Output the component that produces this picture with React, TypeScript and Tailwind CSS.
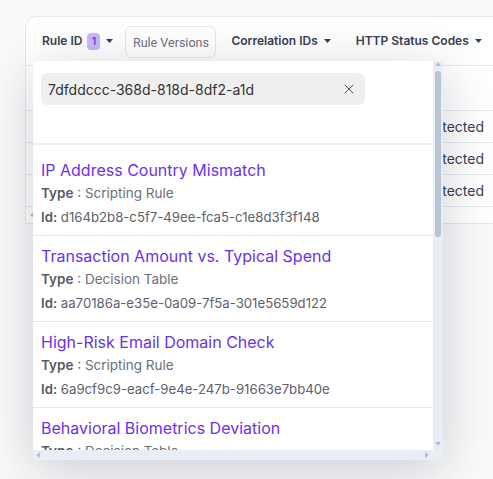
import { X } from "lucide-react";

const rules = [
  {
    name: "IP Address Country Mismatch",
    type: "Scripting Rule",
    id: "d164b2b8-c5f7-49ee-fca5-c1e8d3f3f148",
  },
  {
    name: "Transaction Amount vs. Typical Spend",
    type: "Decision Table",
    id: "aa70186a-e35e-0a09-7f5a-301e5659d122",
  },
  {
    name: "High-Risk Email Domain Check",
    type: "Scripting Rule",
    id: "6a9cf9c9-eacf-9e4e-247b-91663e7bb40e",
  },
  {
    name: "Behavioral Biometrics Deviation",
    type: "Decision Table",
    id: "0c7e21d4-5a8b-4f3e-9d12-7b6a3e8f1c20",
  },
];

function Caret() {
  return (
    <svg width="7" height="4" viewBox="0 0 7 4" className="ml-[6px]">
      <path d="M0 0h7L3.5 4z" fill="#374151" />
    </svg>
  );
}

function Arrow({ dir }: { dir: "up" | "down" | "left" | "right" }) {
  const d = {
    up: "M0 4h6L3 0z",
    down: "M0 0h6L3 4z",
    left: "M4 0v6L0 3z",
    right: "M0 0v6L4 3z",
  }[dir];
  const box = dir === "up" || dir === "down" ? "0 0 6 4" : "0 0 4 6";
  const w = dir === "up" || dir === "down" ? 6 : 4;
  const h = dir === "up" || dir === "down" ? 4 : 6;
  return (
    <svg width={w} height={h} viewBox={box}>
      <path d={d} fill="#b3bfcd" />
    </svg>
  );
}

export default function App() {
  return (
    <div className="relative h-[479px] w-[493px] overflow-hidden bg-[#fafafb] pl-[25px] pt-4 font-['Inter',sans-serif]">
      {/* table card */}
      <div className="w-[500px] rounded-tl-xl border border-[#e6e8ef] bg-white">
        <div className="flex h-[49px] items-center border-b border-[#e6e8ef] pl-4 text-[12px] font-semibold text-[#374151]">
          <span>Rule ID</span>
          <span className="ml-[5px] flex h-[17px] w-[13px] items-center justify-center rounded-[4px] bg-[#c9b9f8] text-[11px] font-medium text-[#6d31e6]">
            1
          </span>
          <Caret />
          <button className="ml-[12px] mt-[1px] flex h-[32px] w-[91px] items-center justify-center rounded-md border border-[#e6e8ef] pt-[3px] font-['Roboto',sans-serif] text-[12.5px] font-normal text-[#6b7280]">
            Rule Versions
          </button>
          <span className="ml-[15px]">Correlation IDs</span>
          <Caret />
          <span className="ml-[25px]">HTTP Status Codes</span>
          <Caret />
        </div>
        <div className="h-[45px] border-b border-[#e6e8ef]" />
        {[0, 1, 2].map((i) => (
          <div
            key={i}
            className="flex h-[32px] items-center border-b border-[#e6e8ef] pl-[398px] text-[14px] text-[#374151]"
          >
            Detected
          </div>
        ))}
        <div className="flex h-[16px] items-center pl-[4px]">
          <Arrow dir="left" />
        </div>
      </div>

      {/* dropdown popover */}
      <div className="absolute left-[33px] top-[61px] flex h-[399px] w-[410px] flex-col bg-white shadow-[0_10px_50px_rgba(20,25,50,0.2)]">
        <div className="flex min-h-0 flex-1">
          <div className="min-w-0 flex-1 overflow-hidden">
            <div className="h-[84px] border-b-2 border-[#ededed] px-2 pt-3">
              <div className="flex h-8 w-[324px] items-center justify-between rounded-md bg-[#efefef] pl-[7px] pr-[8px]">
                <span className="text-[14px] text-[#333]">7dfddccc-368d-818d-8df2-a1d</span>
                <X size={16} strokeWidth={1.5} color="#555" />
              </div>
            </div>
            <div className="pt-[5px]">
              {rules.map((r) => (
                <div key={r.name} className="border-b border-[#e8e8e8] px-2 pb-[5px] pt-2">
                  <div className="text-[16px] leading-6 text-[#6d31e6]">{r.name}</div>
                  <div className="text-[13.5px] leading-[23px] text-[#6b6f78]">
                    <span className="font-semibold text-[#555a63]">Type</span> : {r.type}
                  </div>
                  <div className="text-[13.2px] leading-[25px] text-[#5c616c]">
                    <span className="font-semibold text-[#555a63]">Id:</span> {r.id}
                  </div>
                </div>
              ))}
            </div>
          </div>
          <div className="flex w-[10px] flex-col items-center bg-[#e9edf5] pt-[1px]">
            <Arrow dir="up" />
            <div className="mt-[5px] h-[166px] w-[6px] rounded-full bg-[#b9c4d2]" />
            <div className="flex-1" />
            <div className="mb-[4px]">
              <Arrow dir="down" />
            </div>
          </div>
        </div>
        <div className="flex h-[10px] items-center justify-between bg-[#e9edf5] pl-[3px] pr-[14px]">
          <Arrow dir="left" />
          <Arrow dir="right" />
        </div>
      </div>
    </div>
  );
}
